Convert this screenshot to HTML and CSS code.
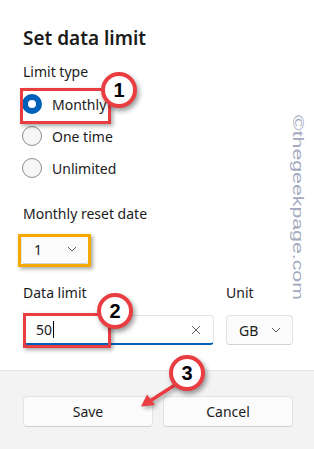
FILE: index.html
```html
<!DOCTYPE html>
<html lang="en">
<head>
    <meta charset="UTF-8">
    <meta name="viewport" content="width=device-width, initial-scale=1.0">
    <title>Set data limit</title>
    <link rel="stylesheet" href="styles.css">
</head>
<body>
    <div class="dialog">
        <div class="content">
            <h1>Set data limit</h1>
            <div class="label">Limit type</div>
            <div class="radios">
                <div class="radio checked"><span class="dot"></span>Monthly</div>
                <div class="radio"><span class="dot"></span>One time</div>
                <div class="radio"><span class="dot"></span>Unlimited</div>
            </div>

            <div class="label reset-label">Monthly reset date</div>
            <div class="select day">
                <span>1</span>
                <svg class="chevron" width="10" height="6" viewBox="0 0 10 6"><path d="M1 1l4 4 4-4" fill="none" stroke="#5d5d5d" stroke-width="1"/></svg>
            </div>

            <div class="limit-row">
                <div class="field grow">
                    <div class="label">Data limit</div>
                    <div class="input">
                        <span class="value">50<span class="caret"></span></span>
                        <svg class="clear" width="10" height="10" viewBox="0 0 10 10"><path d="M1 1l8 8M9 1l-8 8" fill="none" stroke="#5d5d5d" stroke-width="1"/></svg>
                    </div>
                </div>
                <div class="field">
                    <div class="label">Unit</div>
                    <div class="select unit">
                        <span>GB</span>
                        <svg class="chevron" width="10" height="6" viewBox="0 0 10 6"><path d="M1 1l4 4 4-4" fill="none" stroke="#5d5d5d" stroke-width="1"/></svg>
                    </div>
                </div>
            </div>
        </div>

        <div class="footer">
            <button>Save</button>
            <button>Cancel</button>
        </div>

        <!-- annotations drawn over the dialog -->
        <div class="mark red monthly-box"></div>
        <div class="mark yellow day-box"></div>
        <div class="mark red input-box"></div>
        <svg class="arrow" width="70" height="50" viewBox="130 365 70 50">
            <path d="M178 383L150 401" stroke="#ea3d42" stroke-width="3.5" stroke-linecap="round"/>
            <path d="M141 406.5L147 394.5L155 405z" fill="#ea3d42"/>
        </svg>
        <div class="step one">1</div>
        <div class="step two">2</div>
        <div class="step three">3</div>
        <div class="watermark">©thegeekpage.com</div>
    </div>
</body>
</html>
```

FILE: styles.css
```css
body {
    margin: 0;
    font-family: "Noto Sans", Arial, sans-serif;
    font-size: 14px;
    color: #1b1b1b;
    background: #fff;
}
.dialog {
    position: relative;
    width: 314px;
    height: 449px;
    overflow: hidden;
    display: flex;
    flex-direction: column;
}
.content {
    padding: 24px 21px 25px 23px;
}
h1 {
    margin: 0 0 10px;
    font-size: 19px;
    line-height: 28px;
    font-weight: 600;
}
.label {
    line-height: 20px;
}
.radios {
    margin-top: 6px;
}
.radio {
    display: flex;
    align-items: center;
    height: 32px;
}
.dot {
    width: 18px;
    height: 18px;
    margin: 0 10px 0 -1px;
    border: 1px solid #8b8b8b;
    border-radius: 50%;
    background: #f6f6f6;
    box-sizing: content-box;
}
.radio.checked .dot {
    width: 8px;
    height: 8px;
    border: 6px solid #005fb8;
    background: #fff;
}
.reset-label {
    margin-top: 20px;
}
.select {
    display: flex;
    align-items: center;
    justify-content: space-between;
    box-sizing: border-box;
    height: 30px;
    padding: 0 11px 0 12px;
    background: #fbfbfb;
    border: 1px solid #e3e3e3;
    border-bottom-color: #d2d2d2;
    border-radius: 4px;
}
.day {
    width: 68px;
    margin-top: 10px;
    margin-left: -2px;
}
.limit-row {
    display: flex;
    gap: 12px;
    margin-top: 19px;
}
.field.grow {
    flex: 1;
}
.field .label {
    margin-bottom: 12px;
}
.input {
    display: flex;
    align-items: center;
    justify-content: space-between;
    box-sizing: border-box;
    height: 30px;
    padding: 0 12px 0 12px;
    background: #fff;
    border: 1px solid #e3e3e3;
    border-bottom: 2px solid #005fb8;
    border-radius: 4px;
}
.value {
    display: flex;
    align-items: center;
}
.caret {
    width: 1px;
    height: 17px;
    margin-left: 1px;
    background: #000;
}
.unit {
    width: 67px;
}
.footer {
    flex: 1;
    display: flex;
    gap: 10px;
    padding: 25px 21px 0 23px;
    background: #f3f3f3;
    border-top: 1px solid #e5e5e5;
}
button {
    flex: 1;
    height: 31px;
    font-family: inherit;
    font-size: 14px;
    color: #1b1b1b;
    background: #fbfbfb;
    border: 1px solid #e3e3e3;
    border-bottom-color: #d0d0d0;
    border-radius: 4px;
}
.mark {
    position: absolute;
    box-sizing: border-box;
    border: 3px solid;
    box-shadow: 2px 2px 4px rgba(0, 0, 0, 0.35);
}
.red {
    border-color: #ea3d42;
}
.yellow {
    border-color: #f5a900;
}
.monthly-box {
    left: 20px;
    top: 88px;
    width: 91px;
    height: 36px;
}
.day-box {
    left: 18px;
    top: 234px;
    width: 73px;
    height: 33px;
}
.input-box {
    left: 23px;
    top: 313px;
    width: 88px;
    height: 35px;
}
.arrow {
    position: absolute;
    left: 130px;
    top: 365px;
    filter: drop-shadow(2px 2px 2px rgba(0, 0, 0, 0.35));
}
.step {
    position: absolute;
    width: 28px;
    height: 28px;
    border: 4px solid #ea3d42;
    border-radius: 50%;
    background: #fff;
    box-shadow: 2px 3px 5px rgba(0, 0, 0, 0.4);
    font-family: "Liberation Sans", Arial, sans-serif;
    font-weight: bold;
    font-size: 20px;
    line-height: 28px;
    text-align: center;
    color: #000;
}
.one {
    left: 101px;
    top: 72px;
}
.two {
    left: 97px;
    top: 293px;
}
.three {
    left: 169px;
    top: 355px;
}
.watermark {
    position: absolute;
    left: 306px;
    top: 115px;
    transform-origin: 0 0;
    transform: rotate(90deg) scale(1.52, 1);
    font-family: "Liberation Sans", Arial, sans-serif;
    font-size: 14px;
    line-height: 16px;
    color: #a3aac0;
    white-space: nowrap;
}
```
